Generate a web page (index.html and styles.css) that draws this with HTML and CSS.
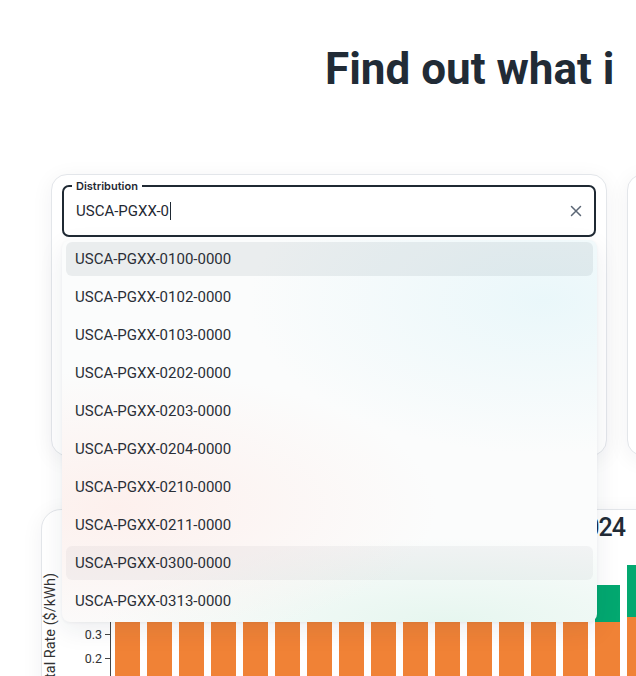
FILE: index.html
```html
<!DOCTYPE html>
<html lang="en">
<head>
<meta charset="utf-8">
<title>Find out what is in your bill</title>
<link rel="stylesheet" href="styles.css">
</head>
<body>
<main class="page">
  <div class="headline-wrap">
    <h1 class="headline">Find out what is in your electricity bill</h1>
  </div>

  <section class="cards">
    <div class="card card-search">
      <div class="combobox">
        <fieldset class="field">
          <legend class="field-label">Distribution</legend>
          <div class="field-row">
            <div class="field-value">USCA-PGXX-0<span class="caret"></span></div>
            <button class="clear" type="button" aria-label="Clear">
              <svg viewBox="0 0 12 12" width="12" height="12"><path d="M1.5 1.5L10.5 10.5M10.5 1.5L1.5 10.5" /></svg>
            </button>
          </div>
        </fieldset>
        <ul class="listbox">
          <li class="option is-active">USCA-PGXX-0100-0000</li>
          <li class="option">USCA-PGXX-0102-0000</li>
          <li class="option">USCA-PGXX-0103-0000</li>
          <li class="option">USCA-PGXX-0202-0000</li>
          <li class="option">USCA-PGXX-0203-0000</li>
          <li class="option">USCA-PGXX-0204-0000</li>
          <li class="option">USCA-PGXX-0210-0000</li>
          <li class="option">USCA-PGXX-0211-0000</li>
          <li class="option is-hover">USCA-PGXX-0300-0000</li>
          <li class="option">USCA-PGXX-0313-0000</li>
        </ul>
      </div>
    </div>
    <div class="card card-side"></div>
  </section>

  <section class="chart-card">
    <header class="chart-head">
      <h2 class="chart-title">Total Rate Breakdown 2024</h2>
    </header>
    <div class="chart-body">
      <div class="y-title"><span>Total Rate ($/kWh)</span></div>
      <div class="y-ticks">
        <div class="tick"><span>0.6</span><i></i></div>
        <div class="tick"><span>0.5</span><i></i></div>
        <div class="tick"><span>0.4</span><i></i></div>
        <div class="tick"><span>0.3</span><i></i></div>
        <div class="tick"><span>0.2</span><i></i></div>
        <div class="tick"><span>0.1</span><i></i></div>
        <div class="tick"><span>0.0</span><i></i></div>
      </div>
      <div class="plot">
        <div class="bar"><span class="seg seg-green" style="height:30px"></span><span class="seg seg-orange" style="height:92px"></span></div>
        <div class="bar"><span class="seg seg-green" style="height:30px"></span><span class="seg seg-orange" style="height:92px"></span></div>
        <div class="bar"><span class="seg seg-green" style="height:30px"></span><span class="seg seg-orange" style="height:92px"></span></div>
        <div class="bar"><span class="seg seg-green" style="height:30px"></span><span class="seg seg-orange" style="height:92px"></span></div>
        <div class="bar"><span class="seg seg-green" style="height:30px"></span><span class="seg seg-orange" style="height:92px"></span></div>
        <div class="bar"><span class="seg seg-green" style="height:30px"></span><span class="seg seg-orange" style="height:92px"></span></div>
        <div class="bar"><span class="seg seg-green" style="height:30px"></span><span class="seg seg-orange" style="height:92px"></span></div>
        <div class="bar"><span class="seg seg-green" style="height:30px"></span><span class="seg seg-orange" style="height:92px"></span></div>
        <div class="bar"><span class="seg seg-green" style="height:30px"></span><span class="seg seg-orange" style="height:92px"></span></div>
        <div class="bar"><span class="seg seg-green" style="height:30px"></span><span class="seg seg-orange" style="height:92px"></span></div>
        <div class="bar"><span class="seg seg-green" style="height:30px"></span><span class="seg seg-orange" style="height:92px"></span></div>
        <div class="bar"><span class="seg seg-green" style="height:30px"></span><span class="seg seg-orange" style="height:92px"></span></div>
        <div class="bar"><span class="seg seg-green" style="height:30px"></span><span class="seg seg-orange" style="height:92px"></span></div>
        <div class="bar"><span class="seg seg-green" style="height:30px"></span><span class="seg seg-orange" style="height:92px"></span></div>
        <div class="bar"><span class="seg seg-green" style="height:30px"></span><span class="seg seg-orange" style="height:92px"></span></div>
        <div class="bar"><span class="seg seg-green" style="height:37px"></span><span class="seg seg-orange" style="height:84px"></span></div>
        <div class="bar"><span class="seg seg-green" style="height:52px"></span><span class="seg seg-orange" style="height:89px"></span></div>
        <div class="bar"><span class="seg seg-green" style="height:50px"></span><span class="seg seg-orange" style="height:88px"></span></div>
      </div>
    </div>
  </section>
</main>
</body>
</html>
```

FILE: styles.css
```css
* { box-sizing: border-box; }

html, body {
  margin: 0;
  padding: 0;
  background: #ffffff;
  overflow: hidden;
}

body {
  font-family: Roboto, "Liberation Sans", sans-serif;
  color: #1f2933;
  width: 636px;
  height: 676px;
}

.page {
  width: 1400px;
}

.headline-wrap {
  padding: 43px 0 0 325px;
}

.headline {
  margin: 0;
  width: 290px;
  overflow: hidden;
  font-family: Roboto, "Liberation Sans", sans-serif;
  font-weight: 700;
  font-size: 44px;
  line-height: 52px;
  color: #212b36;
  white-space: nowrap;
}

/* ---------- cards row ---------- */
.cards {
  display: flex;
  gap: 20px;
  margin-top: 79px;
  padding-left: 51px;
}

.card {
  flex: 0 0 556px;
  height: 282px;
  background: #ffffff;
  border: 1px solid #e3e6ea;
  border-radius: 16px;
  box-shadow: 0 4px 22px rgba(30, 41, 59, 0.06);
}

.card-search {
  padding: 5px 10px;
}

.combobox {
  position: relative;
}

.field {
  margin: 0;
  padding: 0 8px 5px 8px;
  border: 2px solid #1f2933;
  border-radius: 7px;
  min-width: 0;
}

.field-label {
  padding: 0 4px;
  font-family: Inter, "Noto Sans", sans-serif;
  font-weight: 600;
  font-size: 11px;
  line-height: 12px;
  color: #1f2933;
}

.field-row {
  display: flex;
  align-items: center;
  height: 38px;
}

.field-value {
  flex: 1;
  padding-left: 4px;
  font-size: 15px;
  color: #1f2933;
  display: flex;
  align-items: center;
}

.caret {
  display: inline-block;
  width: 1px;
  height: 18px;
  margin-left: 1px;
  background: #1f2933;
}

.clear {
  width: 20px;
  height: 20px;
  padding: 0;
  border: 0;
  background: transparent;
  display: flex;
  align-items: center;
  justify-content: center;
}

.clear svg path {
  stroke: #5b6675;
  stroke-width: 1.5;
  stroke-linecap: round;
  fill: none;
}

/* ---------- dropdown ---------- */
.listbox {
  position: absolute;
  top: calc(100% + 3px);
  left: 0;
  width: 535px;
  margin: 0;
  padding: 2px 4px 4px;
  list-style: none;
  display: flex;
  flex-direction: column;
  gap: 4px;
  border-radius: 8px;
  z-index: 5;
  background:
    radial-gradient(ellipse 55% 40% at 90% 16%, rgba(233, 247, 250, 0.95), rgba(233, 247, 250, 0) 100%),
    radial-gradient(ellipse 60% 36% at 10% 70%, rgba(253, 240, 237, 1), rgba(253, 240, 237, 0) 100%),
    radial-gradient(ellipse 65% 22% at 72% 100%, rgba(230, 246, 239, 1), rgba(230, 246, 239, 0) 100%),
    #fbfcfc;
  box-shadow: 0 8px 26px rgba(30, 41, 59, 0.08), 0 1px 3px rgba(30, 41, 59, 0.05);
}

.option {
  height: 34px;
  display: flex;
  align-items: center;
  padding-left: 9px;
  border-radius: 6px;
  font-size: 15px;
  color: #2a2f37;
}

.option.is-active {
  background: rgba(40, 60, 75, 0.08);
}

.option.is-hover {
  background: rgba(40, 50, 60, 0.045);
}

/* ---------- chart card ---------- */
.chart-card {
  margin: 53px 0 0 41px;
  width: 640px;
  height: 260px;
  background: #ffffff;
  border: 1px solid #e3e6ea;
  border-radius: 20px;
  box-shadow: 0 4px 22px rgba(30, 41, 59, 0.06);
}

.chart-head {
  display: flex;
  justify-content: flex-end;
  padding: 3px 55px 0 0;
}

.chart-title {
  margin: 0;
  font-family: Roboto, "Liberation Sans", sans-serif;
  font-weight: 500;
  font-size: 25px;
  line-height: 30px;
  letter-spacing: -1px;
  color: #212b36;
}

.chart-body {
  display: grid;
  grid-template-columns: 16px 52px 1fr;
  align-items: start;
  margin-top: 7px;
}

.y-title {
  align-self: stretch;
  display: flex;
  align-items: center;
  justify-content: center;
}

.y-title span {
  writing-mode: vertical-rl;
  transform: rotate(180deg);
  font-size: 14.5px;
  color: #333333;
  white-space: nowrap;
}

.y-ticks {
  display: flex;
  flex-direction: column;
}

.tick {
  height: 24px;
  display: flex;
  align-items: center;
  justify-content: flex-end;
  gap: 3px;
  font-size: 12.5px;
  color: #333333;
}

.tick i {
  display: block;
  width: 5px;
  height: 1px;
  background: #444444;
}

.plot {
  height: 156px;
  display: flex;
  align-items: flex-end;
  gap: 7px;
  padding-left: 4px;
  border-left: 1px solid #444444;
}

.bar {
  flex: 0 0 25px;
  display: flex;
  flex-direction: column;
}

.seg {
  display: block;
}

.seg-green { background: #03a870; }
.seg-orange { background: #f08236; }
```
